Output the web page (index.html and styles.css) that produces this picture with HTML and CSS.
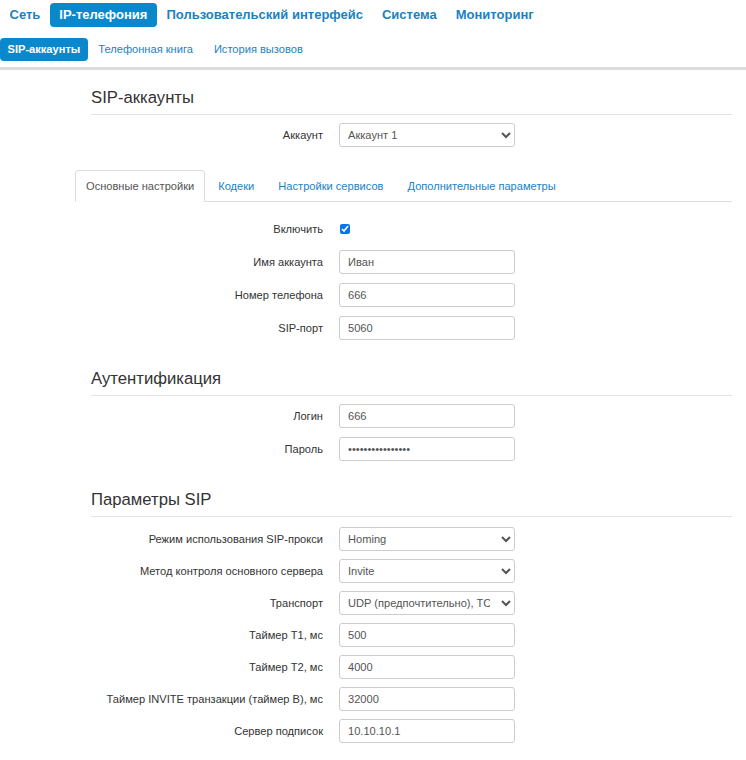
FILE: index.html
```html
<!DOCTYPE html>
<html lang="ru">
<head>
<meta charset="utf-8">
<title>SIP-аккаунты</title>
<link rel="stylesheet" href="styles.css">
</head>
<body>
<nav class="topnav">
  <a class="nav-item">Сеть</a>
  <a class="nav-item active">IP-телефония</a>
  <a class="nav-item">Пользовательский интерфейс</a>
  <a class="nav-item">Система</a>
  <a class="nav-item">Мониторинг</a>
</nav>
<nav class="subnav">
  <a class="sub-item active">SIP-аккаунты</a>
  <a class="sub-item">Телефонная книга</a>
  <a class="sub-item">История вызовов</a>
</nav>
<div class="divider"></div>

<main class="content">
  <h3 class="section-title">SIP-аккаунты</h3>
  <div class="row first">
    <label class="lbl">Аккаунт</label>
    <div class="ctl"><select class="field"><option>Аккаунт 1</option></select></div>
  </div>

  <ul class="tabs">
    <li class="tab active">Основные настройки</li>
    <li class="tab">Кодеки</li>
    <li class="tab">Настройки сервисов</li>
    <li class="tab">Дополнительные параметры</li>
  </ul>

  <div class="row check-row">
    <label class="lbl">Включить</label>
    <div class="ctl"><input type="checkbox" class="check" checked></div>
  </div>
  <div class="row">
    <label class="lbl">Имя аккаунта</label>
    <div class="ctl"><input class="field" type="text" value="Иван"></div>
  </div>
  <div class="row">
    <label class="lbl">Номер телефона</label>
    <div class="ctl"><input class="field" type="text" value="666"></div>
  </div>
  <div class="row">
    <label class="lbl">SIP-порт</label>
    <div class="ctl"><input class="field" type="text" value="5060"></div>
  </div>

  <h3 class="section-title sub">Аутентификация</h3>
  <div class="row first">
    <label class="lbl">Логин</label>
    <div class="ctl"><input class="field" type="text" value="666"></div>
  </div>
  <div class="row">
    <label class="lbl">Пароль</label>
    <div class="ctl"><input class="field" type="password" value="1234567890123456"></div>
  </div>

  <h3 class="section-title sub">Параметры SIP</h3>
  <div class="sip-group">
    <div class="row first">
      <label class="lbl">Режим использования SIP-прокси</label>
      <div class="ctl"><select class="field"><option>Homing</option></select></div>
    </div>
    <div class="row">
      <label class="lbl">Метод контроля основного сервера</label>
      <div class="ctl"><select class="field"><option>Invite</option></select></div>
    </div>
    <div class="row">
      <label class="lbl">Транспорт</label>
      <div class="ctl"><select class="field"><option>UDP (предпочтительно), TCP</option></select></div>
    </div>
    <div class="row">
      <label class="lbl">Таймер T1, мс</label>
      <div class="ctl"><input class="field" type="text" value="500"></div>
    </div>
    <div class="row">
      <label class="lbl">Таймер T2, мс</label>
      <div class="ctl"><input class="field" type="text" value="4000"></div>
    </div>
    <div class="row">
      <label class="lbl">Таймер INVITE транзакции (таймер B), мс</label>
      <div class="ctl"><input class="field" type="text" value="32000"></div>
    </div>
    <div class="row">
      <label class="lbl">Сервер подписок</label>
      <div class="ctl"><input class="field" type="text" value="10.10.10.1"></div>
    </div>
  </div>
</main>
</body>
</html>
```
FILE: styles.css
```css
* { box-sizing: border-box; }

body {
  margin: 0;
  font-family: "Liberation Sans", Arial, sans-serif;
  color: #333;
  background: #fff;
}

.topnav {
  display: flex;
  align-items: center;
  padding-top: 3px;
}

.nav-item {
  display: block;
  height: 24px;
  line-height: 24px;
  padding: 0 9.5px;
  font-size: 13px;
  font-weight: bold;
  color: #1a82c4;
  border-radius: 4px;
}

.nav-item.active {
  background: #0a88cb;
  color: #fff;
}

.subnav {
  display: flex;
  align-items: center;
  margin-top: 11px;
}

.sub-item {
  display: block;
  height: 23px;
  line-height: 23px;
  padding: 0 10.5px;
  font-size: 11.1px;
  color: #1a82c4;
  border-radius: 4px;
}

.sub-item.active {
  background: #0a88cb;
  color: #fff;
  font-weight: bold;
  padding: 0 7.5px;
}

.divider {
  margin-top: 6px;
  height: 3px;
  background: #dcdcdc;
}

.content {
  margin-left: 75px;
  width: 657px;
  padding-bottom: 20px;
}

.section-title {
  margin: 18px 0 0 16px;
  font-size: 16.7px;
  font-weight: normal;
  line-height: 20px;
  padding-bottom: 6px;
  border-bottom: 1px solid #e3e3e3;
  color: #333;
}

.section-title.sub {
  margin-top: 29px;
}

.row {
  display: flex;
  align-items: center;
  margin-top: 9px;
  height: 24px;
}

.row.first {
  margin-top: 8px;
}

.sip-group .row {
  margin-top: 8px;
}

.sip-group .row.first {
  margin-top: 10px;
}

.lbl {
  width: 248px;
  text-align: right;
  font-size: 11.1px;
  color: #333;
}

.ctl {
  margin-left: 16px;
  width: 176px;
  display: flex;
  align-items: center;
}

.field {
  width: 176px;
  height: 24px;
  border: 1px solid #cccccc;
  border-radius: 3px;
  padding: 0 8px;
  font-family: "Liberation Sans", Arial, sans-serif;
  font-size: 11.1px;
  color: #555;
  background: #fff;
  margin: 0;
}

select.field {
  padding: 0 8px 0 4px;
}

.check {
  width: 10px;
  height: 10px;
  margin: 0 0 0 1px;
  accent-color: #0a75e8;
}

.check-row {
  margin-top: 15px;
}

.tabs {
  list-style: none;
  margin: 23px 0 0 0;
  padding: 0;
  display: flex;
  border-bottom: 1px solid #dddddd;
  height: 32px;
}

.tab {
  height: 31px;
  line-height: 31px;
  padding: 0 10px;
  margin-right: 2px;
  font-size: 11.1px;
  color: #1a82c4;
  border: 1px solid transparent;
  border-radius: 4px 4px 0 0;
}

.tab.active {
  color: #555;
  border-color: #dddddd;
  border-bottom-color: #fff;
  background: #fff;
  height: 32px;
}
```
